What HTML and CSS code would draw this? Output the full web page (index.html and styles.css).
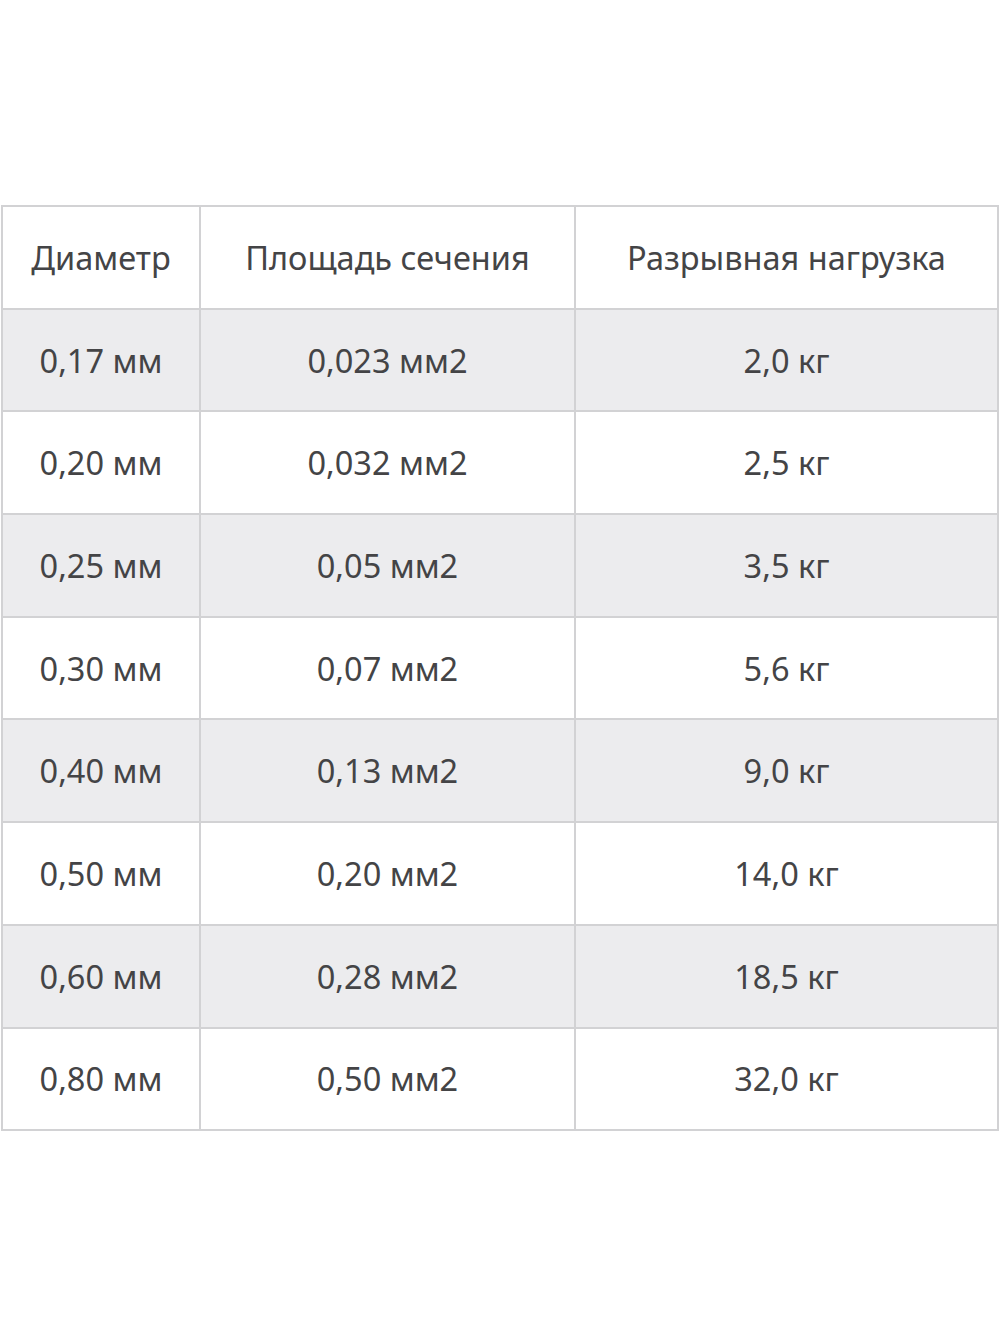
FILE: index.html
```html
<!DOCTYPE html>
<html lang="ru">
<head>
<meta charset="utf-8">
<link rel="stylesheet" href="styles.css">
</head>
<body>
<div class="page">
<table class="spec">
<colgroup><col class="c1"><col class="c2"><col class="c3"></colgroup>
<thead>
<tr><th>Диаметр</th><th>Площадь сечения</th><th>Разрывная нагрузка</th></tr>
</thead>
<tbody>
<tr><td>0,17 мм</td><td>0,023 мм2</td><td>2,0 кг</td></tr>
<tr><td>0,20 мм</td><td>0,032 мм2</td><td>2,5 кг</td></tr>
<tr><td>0,25 мм</td><td>0,05 мм2</td><td>3,5 кг</td></tr>
<tr><td>0,30 мм</td><td>0,07 мм2</td><td>5,6 кг</td></tr>
<tr><td>0,40 мм</td><td>0,13 мм2</td><td>9,0 кг</td></tr>
<tr><td>0,50 мм</td><td>0,20 мм2</td><td>14,0 кг</td></tr>
<tr><td>0,60 мм</td><td>0,28 мм2</td><td>18,5 кг</td></tr>
<tr><td>0,80 мм</td><td>0,50 мм2</td><td>32,0 кг</td></tr>
</tbody>
</table>
</div>
</body>
</html>
```
FILE: styles.css
```css
html, body {
  margin: 0;
  padding: 0;
  background: #ffffff;
}
.page {
  width: 1000px;
  height: 1333px;
  padding: 205px 0 0 1px;
  box-sizing: border-box;
}
.spec {
  width: 996px;
  border-collapse: collapse;
  table-layout: fixed;
  font-family: "Noto Sans", "Open Sans", sans-serif;
  font-size: 32.5px;
  color: #444446;
}
.c1 { width: 198px; }
.c2 { width: 375px; }
.c3 { width: 423px; }
.spec th, .spec td {
  border: 2px solid #d2d2d4;
  height: 100.7px;
  padding: 0;
  text-align: center;
  vertical-align: middle;
  font-weight: normal;
}
.spec tbody tr:nth-child(odd) td {
  background: #ececee;
}
```
